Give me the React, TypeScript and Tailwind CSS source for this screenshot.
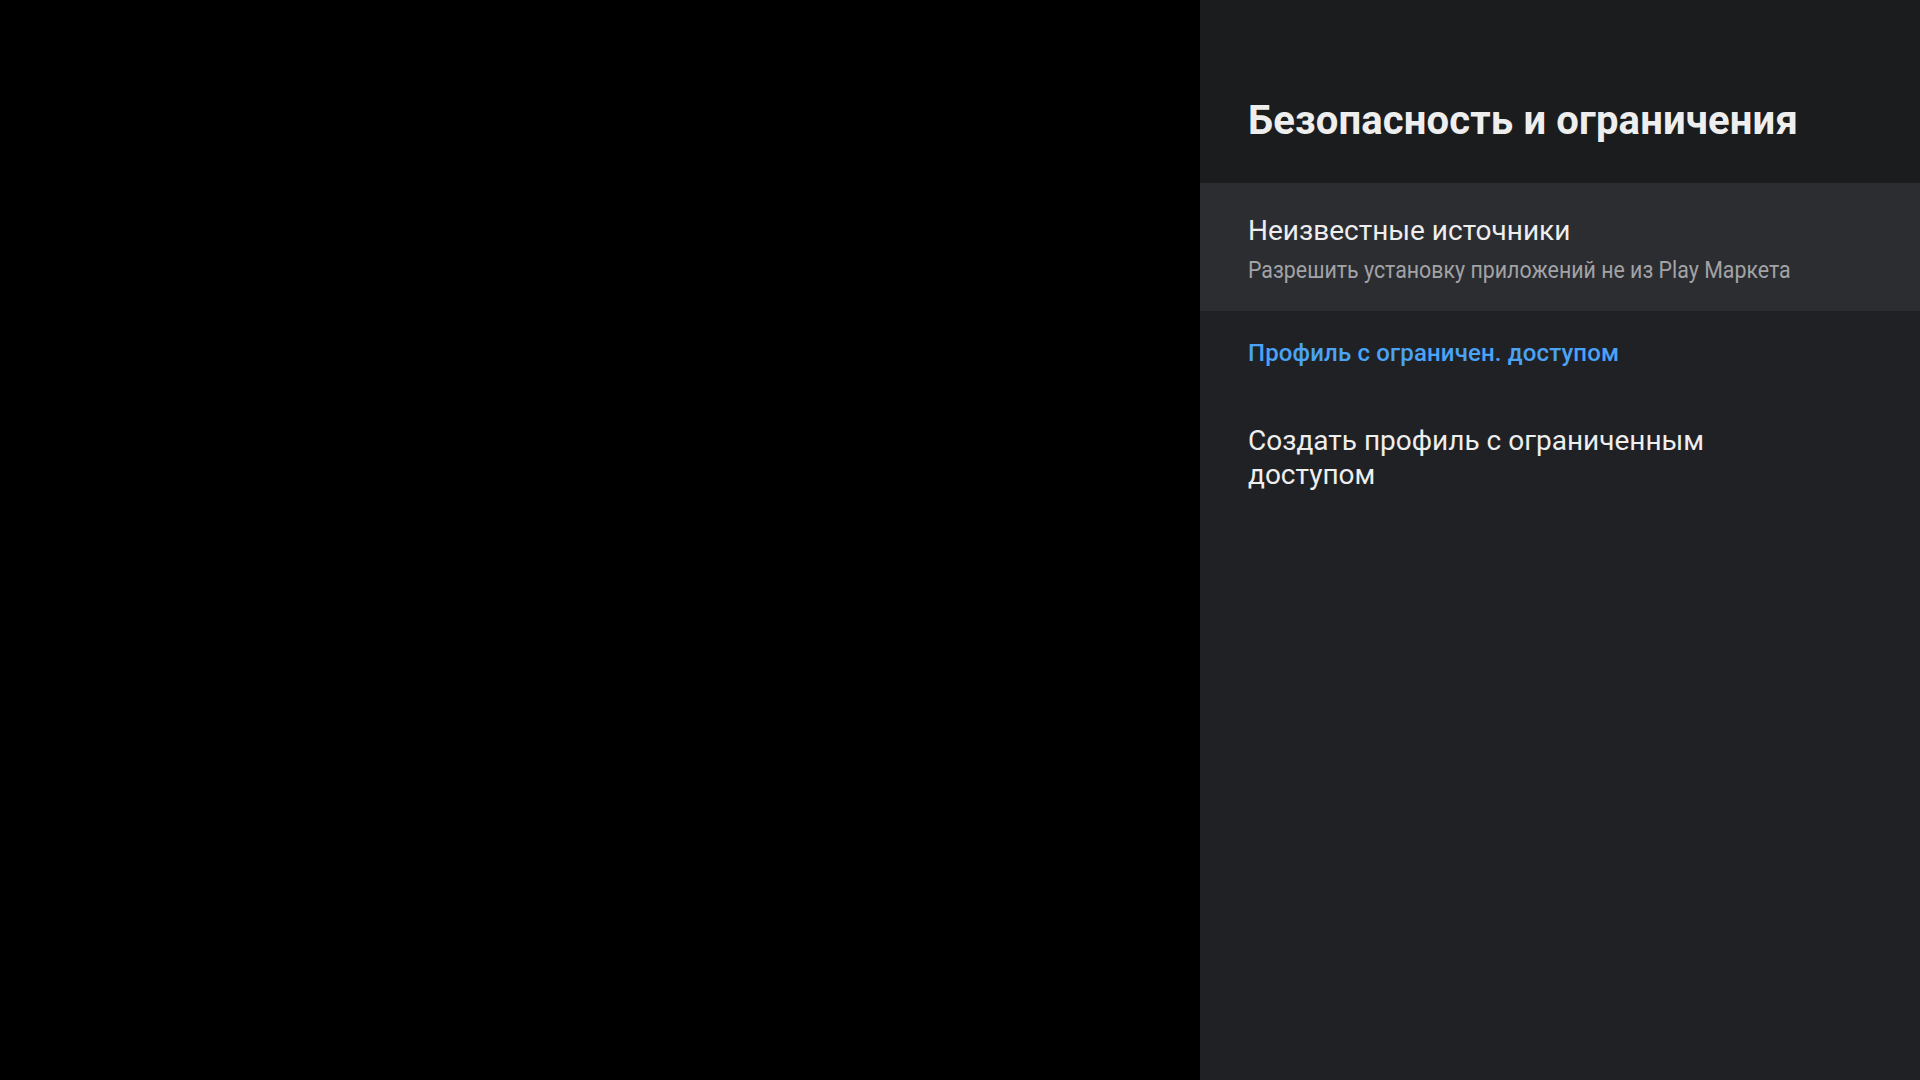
export default function App() {
  return (
    <div className="flex w-[1920px] h-[1080px] overflow-hidden bg-black font-['Roboto',sans-serif]">
      <div className="flex-1 bg-black" />
      <aside className="w-[720px] h-full flex flex-col bg-[#202125]">
        <header className="h-[183px] bg-[#1b1c1e] pl-[48px] pt-[97px]">
          <h1 className="text-[40px] leading-[48px] font-bold text-[#eeeeee] tracking-[0.15px]">
            Безопасность и ограничения
          </h1>
        </header>

        {/* focused row */}
        <div className="h-[128px] bg-[#2c2d31] pl-[48px] pt-[31px]">
          <div className="text-[28px] leading-[34px] text-[#eeeeee]">Неизвестные источники</div>
          <div className="mt-[7px] text-[24px] leading-[30px] text-[#a2a3a6]">
            <span className="inline-block origin-left scale-x-[0.89] whitespace-nowrap">
              Разрешить установку приложений не из Play Маркета
            </span>
          </div>
        </div>

        <div className="pl-[48px] pt-[27px]">
          <div className="text-[24px] leading-[30px] font-medium text-[#4ba3f5] tracking-[0.15px]">
            Профиль с ограничен. доступом
          </div>
        </div>

        <div className="pl-[48px] pt-[56px] pr-[100px]">
          <div className="text-[28px] leading-[34px] text-[#eeeeee] max-w-[560px]">
            Создать профиль с ограниченным доступом
          </div>
        </div>
      </aside>
    </div>
  );
}
